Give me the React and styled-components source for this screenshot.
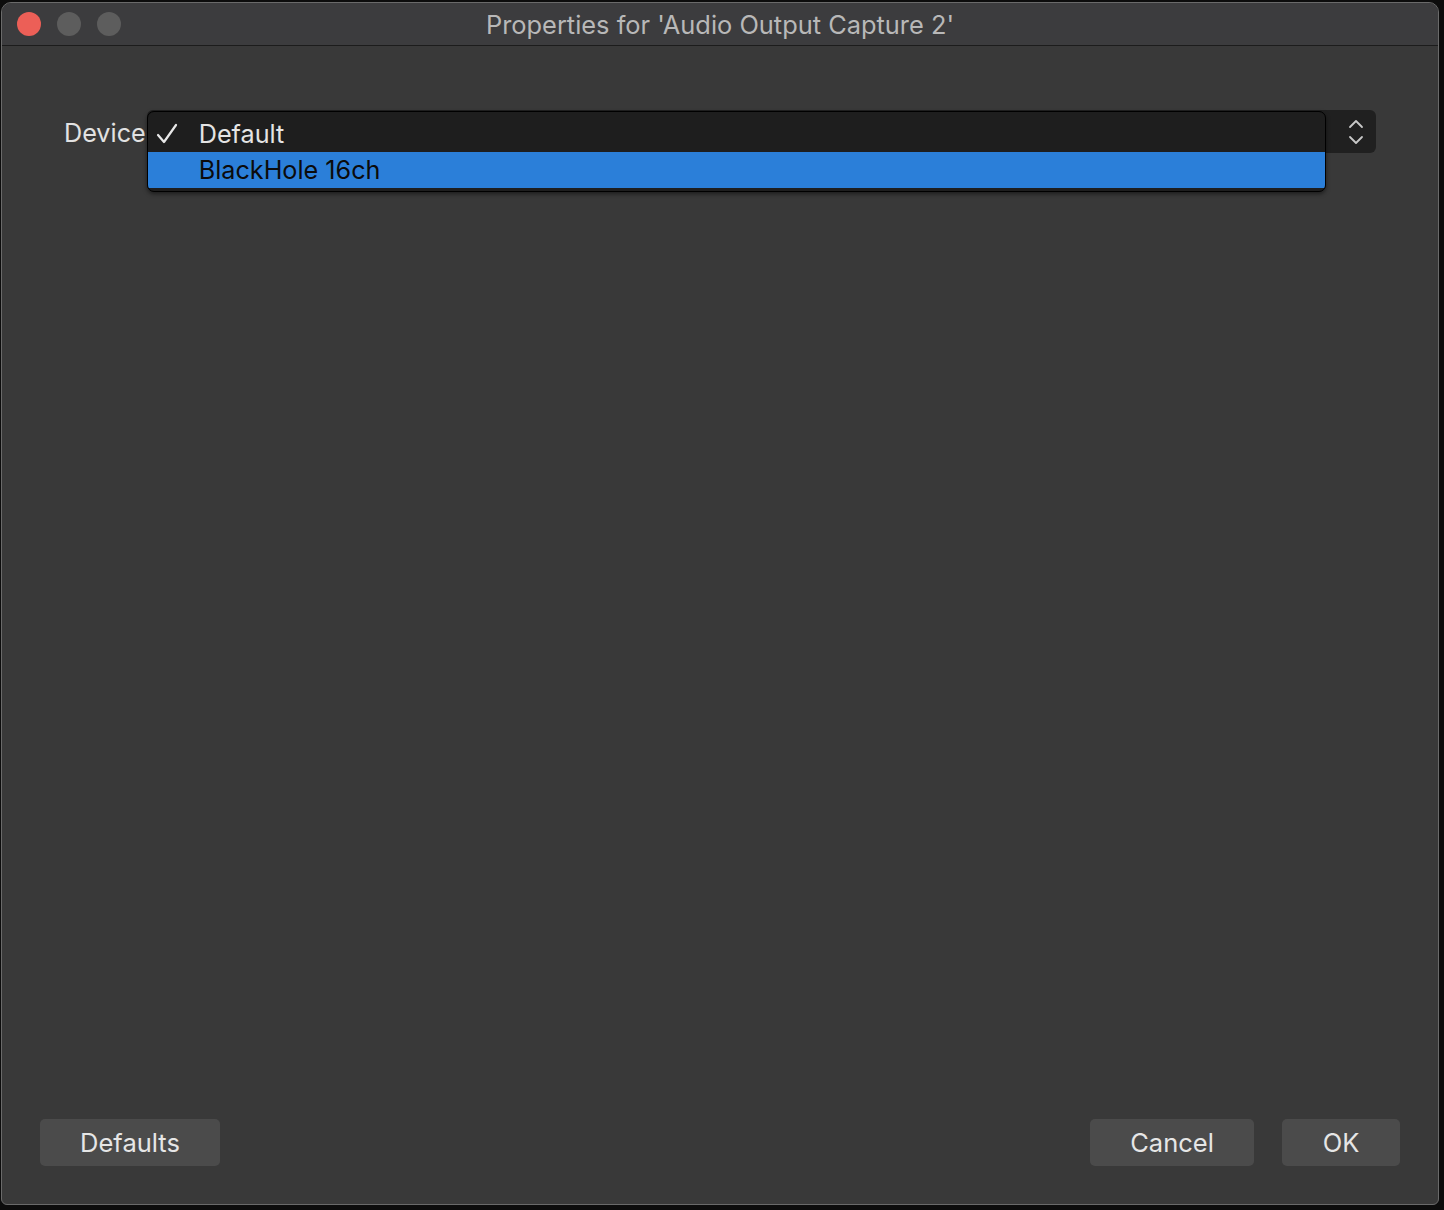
import React from 'react';
import styled, { createGlobalStyle } from 'styled-components';

const Global = createGlobalStyle`
  html, body {
    margin: 0;
    padding: 0;
    background: #0c0c0c;
    font-family: Inter, "Liberation Sans", Arial, sans-serif;
  }
`;

const Screen = styled.div`
  width: 1444px;
  height: 1210px;
  padding: 2px 5px 0 1px;
  box-sizing: border-box;
  overflow: hidden;
`;

const Window = styled.div`
  height: 1203px;
  display: flex;
  flex-direction: column;
  background: #393939;
  border: 1px solid #6a6a6a;
  border-radius: 10px 10px 6px 6px;
  overflow: hidden;
  box-sizing: border-box;
`;

const TitleBar = styled.div`
  height: 42px;
  flex-shrink: 0;
  display: flex;
  align-items: center;
  position: relative;
  background: #3c3c3e;
  border-bottom: 1px solid #1c1c1c;
  padding-left: 15px;
  gap: 16px;
`;

const Light = styled.span`
  width: 24px;
  height: 24px;
  border-radius: 50%;
  background: ${p => p.color};
`;

const Title = styled.div`
  position: absolute;
  left: 0;
  right: 0;
  top: 1px;
  bottom: 0;
  display: flex;
  align-items: center;
  justify-content: center;
  color: #b8b8b8;
  font-size: 25.4px;
  pointer-events: none;
`;

const Body = styled.div`
  flex: 1;
  display: flex;
  flex-direction: column;
  padding: 64px 38px 38px 38px;
`;

const Row = styled.div`
  display: flex;
  align-items: center;
  gap: 1px;
  padding: 0 24px 0 24px;
`;

const Label = styled.span`
  color: #e2e2e2;
  font-size: 25.2px;
  margin-top: 2px;
`;

const Combo = styled.div`
  position: relative;
  flex: 1;
  height: 43px;
  background: #202020;
  border-radius: 6px;
  display: flex;
  justify-content: flex-end;
  align-items: center;
`;

const Stepper = styled.div`
  width: 40px;
  display: flex;
  justify-content: center;
  color: #c8c8c8;
`;

const Popup = styled.div`
  position: absolute;
  left: 0;
  top: 1px;
  right: 50px;
  background: #1e1e1e;
  border: 1px solid #000;
  border-radius: 7px;
  padding: 4px 0 3px;
  box-shadow: 0 2px 4px rgba(0, 0, 0, 0.5);
  overflow: hidden;
`;

const Item = styled.div`
  height: 36px;
  display: flex;
  align-items: center;
  gap: 19px;
  padding-left: 6px;
  font-size: 25.2px;
  color: ${p => (p.selected ? '#0b0b0b' : '#e4e4e4')};
  background: ${p => (p.selected ? '#2b7fd9' : 'transparent')};
`;

const Check = styled.span`
  width: 26px;
  display: flex;
  align-items: center;
  justify-content: center;
`;

const Spacer = styled.div`
  flex: 1;
`;

const Footer = styled.div`
  display: flex;
  align-items: center;
  gap: 28px;
`;

const Button = styled.button`
  height: 47px;
  width: ${p => p.w}px;
  border: none;
  border-radius: 5px;
  background: #4b4b4b;
  color: #e6e6e6;
  font-family: inherit;
  font-size: 25.5px;
  padding: 0;
`;

export default function App() {
  return (
    <Screen>
      <Global />
      <Window>
        <TitleBar>
          <Light color="#ec5f57" />
          <Light color="#5d5d5d" />
          <Light color="#5d5d5d" />
          <Title>Properties for 'Audio Output Capture 2'</Title>
        </TitleBar>
        <Body>
          <Row>
            <Label>Device</Label>
            <Combo>
              <Stepper>
                <svg width="16" height="26" viewBox="0 0 16 26" fill="none" stroke="currentColor" strokeWidth="1.8" strokeLinecap="round" strokeLinejoin="round">
                  <path d="M2 8 L8 2 L14 8" />
                  <path d="M2 18 L8 24 L14 18" />
                </svg>
              </Stepper>
              <Popup>
                <Item>
                  <Check>
                    <svg width="24" height="24" viewBox="0 0 24 24" fill="none" stroke="#e8e8e8" strokeWidth="2.2" strokeLinecap="round" strokeLinejoin="round">
                      <path d="M3 13 L9 20 L21 3" />
                    </svg>
                  </Check>
                  Default
                </Item>
                <Item selected>
                  <Check />
                  BlackHole 16ch
                </Item>
              </Popup>
            </Combo>
          </Row>
          <Spacer />
          <Footer>
            <Button w={180}>Defaults</Button>
            <Spacer />
            <Button w={164}>Cancel</Button>
            <Button w={118}>OK</Button>
          </Footer>
        </Body>
      </Window>
    </Screen>
  );
}
